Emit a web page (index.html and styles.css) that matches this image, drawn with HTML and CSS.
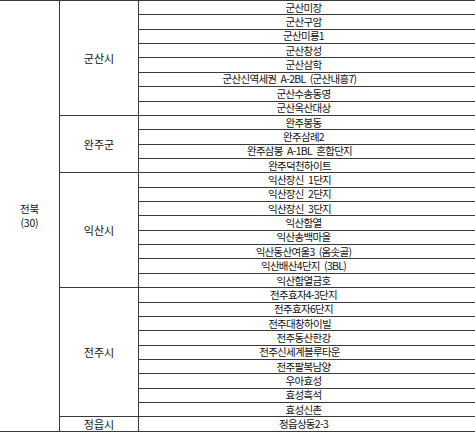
FILE: index.html
```html
<!DOCTYPE html>
<html lang="ko">
<head>
<meta charset="utf-8">
<title>전북 단지 목록</title>
<link rel="stylesheet" href="styles.css">
</head>
<body>
<table class="sheet">
  <colgroup>
    <col class="c-region">
    <col class="c-city">
    <col class="c-name">
  </colgroup>
  <tbody>
    <tr><td class="region" rowspan="30">전북<br>(30)</td><td class="city" rowspan="8">군산시</td><td class="name">군산미장</td></tr>
    <tr><td class="name">군산구암</td></tr>
    <tr><td class="name">군산미룡1</td></tr>
    <tr><td class="name">군산창성</td></tr>
    <tr><td class="name">군산삼학</td></tr>
    <tr><td class="name shift">군산신역세권 A-2BL (군산내흥7)</td></tr>
    <tr><td class="name">군산수송동영</td></tr>
    <tr><td class="name">군산옥산대상</td></tr>
    <tr><td class="city" rowspan="4">완주군</td><td class="name">완주봉동</td></tr>
    <tr><td class="name">완주삼례2</td></tr>
    <tr><td class="name nudge">완주삼봉 A-1BL 혼합단지</td></tr>
    <tr><td class="name nudge">완주덕천하이트</td></tr>
    <tr><td class="city" rowspan="8">익산시</td><td class="name nudge">익산장신 1단지</td></tr>
    <tr><td class="name nudge">익산장신 2단지</td></tr>
    <tr><td class="name nudge">익산장신 3단지</td></tr>
    <tr><td class="name">익산함열</td></tr>
    <tr><td class="name">익산송백마을</td></tr>
    <tr><td class="name">익산동산여울3 (옴솟골)</td></tr>
    <tr><td class="name">익산배산4단지 (3BL)</td></tr>
    <tr><td class="name">익산함열금호</td></tr>
    <tr><td class="city" rowspan="9">전주시</td><td class="name">전주효자4-3단지</td></tr>
    <tr><td class="name">전주효자6단지</td></tr>
    <tr><td class="name nudge">전주대창하이빌</td></tr>
    <tr><td class="name">전주동산한강</td></tr>
    <tr><td class="name nudge">전주신세계블루타운</td></tr>
    <tr><td class="name">전주팔복남양</td></tr>
    <tr><td class="name">우아효성</td></tr>
    <tr><td class="name">효성흑석</td></tr>
    <tr><td class="name">효성신촌</td></tr>
    <tr><td class="city">정읍시</td><td class="name">정읍상동2-3</td></tr>
  </tbody>
</table>
</body>
</html>
```
FILE: styles.css
```css
html, body {
  margin: 0;
  padding: 0;
  background: #ffffff;
  overflow: hidden;
}

.sheet {
  border-collapse: collapse;
  table-layout: fixed;
  width: 477px;
  margin-left: -1px;
  font-family: "Noto Sans CJK KR", "Noto Sans", sans-serif;
  color: #111111;
}

.c-region { width: 60px; }
.c-city { width: 79px; }
.c-name { width: 338px; }

.sheet tr {
  height: 14.37px;
}

.sheet td {
  border: 1px solid #3a3a3a;
  padding: 0;
  text-align: center;
  vertical-align: middle;
  white-space: nowrap;
  overflow: hidden;
}

.region {
  font-size: 10.5px;
  line-height: 14px;
  letter-spacing: -0.2px;
}

.city {
  font-size: 11px;
  line-height: 12px;
  letter-spacing: 0;
}

.name {
  font-size: 10.5px;
  line-height: 12px;
  letter-spacing: -0.7px;
  word-spacing: 2px;
  padding-right: 8px !important;
}

.name.shift {
  padding-right: 36px !important;
}

.name.nudge {
  padding-right: 16px !important;
}
```
